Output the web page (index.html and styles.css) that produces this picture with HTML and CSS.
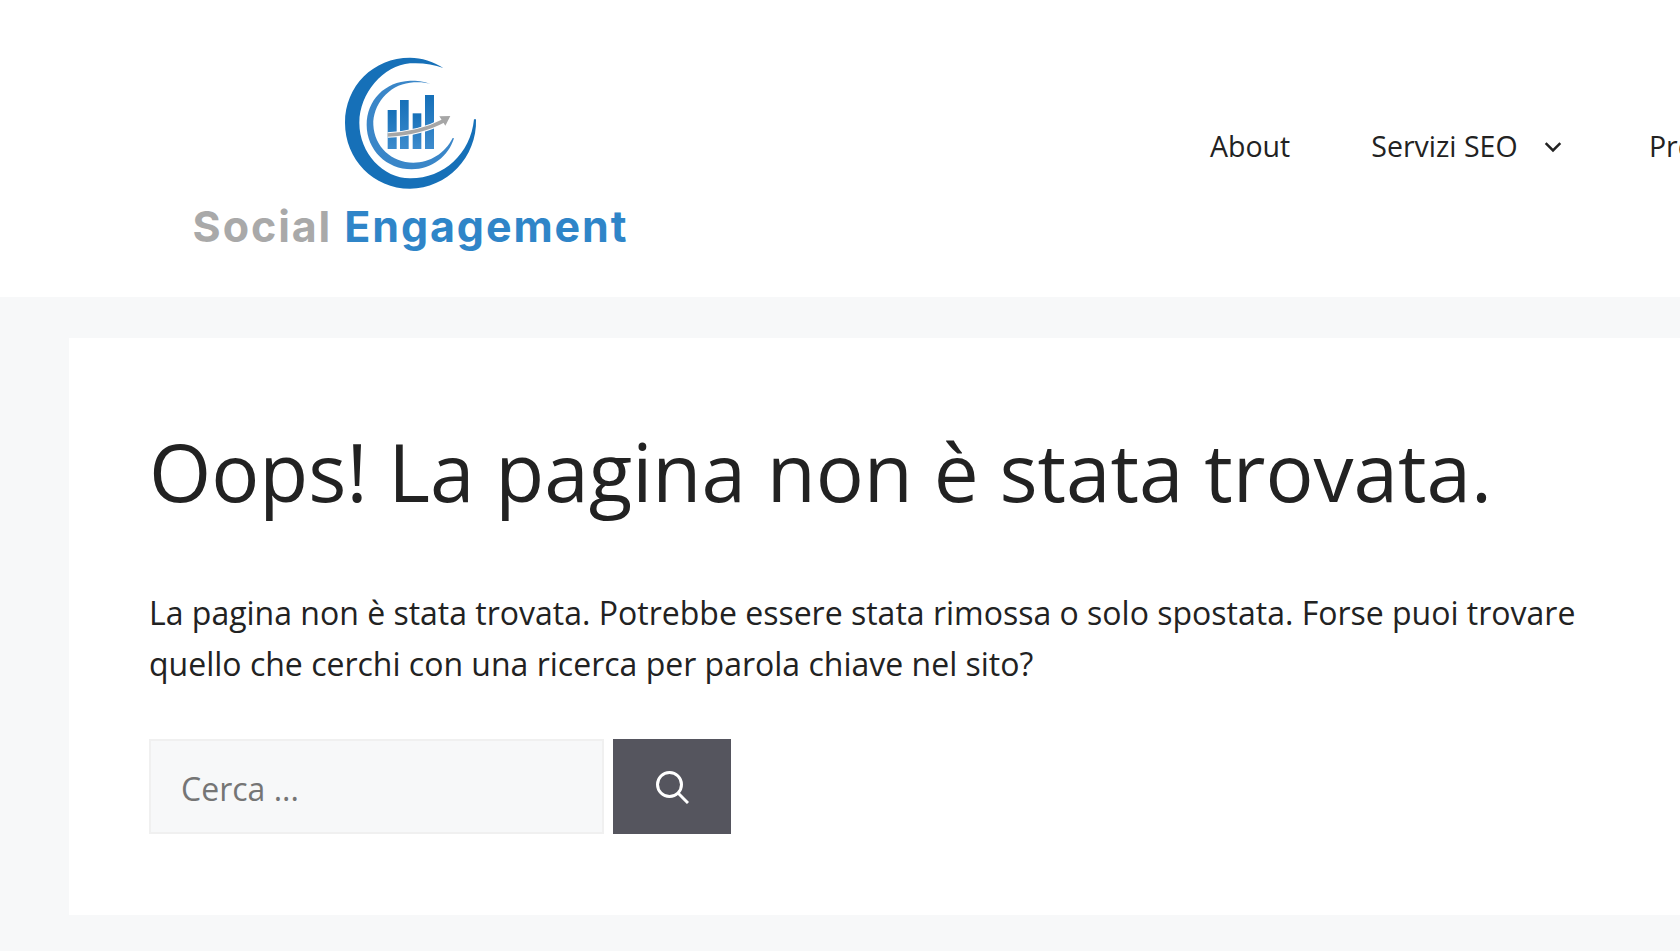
FILE: index.html
```html
<!DOCTYPE html>
<html lang="it">
<head>
<meta charset="UTF-8" />
<meta name="viewport" content="width=device-width, initial-scale=1" />
<title>Pagina non trovata - Social Engagement</title>
<link rel="stylesheet" href="styles.css">
</head>
<body>

<header class="site-header">
  <a class="logo" href="#">
    <svg class="logo-mark" viewBox="0 0 510 450" aria-hidden="true">
      <defs>
        <linearGradient id="bar-fill" x1="0" y1="0" x2="0" y2="1">
          <stop offset="0" stop-color="#1670b8" />
          <stop offset="1" stop-color="#3c8bcd" />
        </linearGradient>
      </defs>
      <path class="ring-outer" d="M370 54C340 34 305 23 270 23C160 23 75 108 75 218C75 328 160 416 270 416C380 416 472 322 468 208L462 208C452 312 370 386 270 385C190 384 118 310 118 218C118 130 190 46 270 40C305 38 340 42 370 54Z" />
      <path class="ring-inner" d="M332 102C310 93 290 92 270 92C195 95 140 150 140 225C140 300 200 358 275 358C335 358 385 320 402 265L398 264C375 310 330 338 280 338C215 338 163 290 160 225C158 165 205 105 270 98C295 95 315 97 332 102Z" />
      <rect class="bar" x="203" y="180" width="27" height="117" />
      <rect class="bar" x="240" y="150" width="26" height="147" />
      <rect class="bar" x="278" y="190" width="26" height="107" />
      <rect class="bar" x="315" y="135" width="27" height="162" />
      <path class="arrow-gap" d="M203 255C260 252 320 240 372 212" />
      <path class="arrow-line" d="M203 255C260 252 320 240 372 212" />
      <path class="arrow-head" d="M358 199L391 198L376 227Z" />
    </svg>
    <span class="logo-text"><span class="logo-grey">Social</span> <span class="logo-blue">Engagement</span></span>
  </a>
  <nav class="main-nav">
    <a href="#">About</a>
    <a href="#">Servizi SEO
      <svg class="chevron" viewBox="0 0 16 10" aria-hidden="true"><path d="M1.5 1.5L8 8L14.500 1.500" /></svg>
    </a>
    <a href="#">Prezzi</a>
  </nav>
</header>

<main class="content">
  <h1>Oops! La pagina non è stata trovata.</h1>
  <p>La pagina non è stata trovata. Potrebbe essere stata rimossa o solo spostata. Forse puoi trovare quello che cerchi con una ricerca per parola chiave nel sito?</p>
  <form class="search-form">
    <input type="search" placeholder="Cerca ..." aria-label="Cerca">
    <button type="submit" aria-label="Cerca">
      <svg viewBox="0 0 34 34" aria-hidden="true"><circle cx="14.500" cy="14.500" r="12" /><path d="M23 23L33 33" /></svg>
    </button>
  </form>
</main>

</body>
</html>
```

FILE: styles.css
```css
html, body {
  margin: 0;
  padding: 0;
  height: 951px;
  overflow: hidden;
}
body {
  font-family: "Open Sans", "Noto Sans", sans-serif;
  background: #f7f8f9;
  color: #222;
  width: 1900px;
}
a {
  color: inherit;
  text-decoration: none;
}

/* Header */
.site-header {
  background: #fff;
  height: 297px;
  display: flex;
  align-items: flex-start;
}
.logo {
  margin-left: 193px;
  width: 435px;
  display: flex;
  flex-direction: column;
  align-items: center;
  padding-top: 50px;
}
.logo-mark {
  width: 170px;
  height: 150px;
  margin-right: 11px;
}
.ring-outer { fill: #1670b8; }
.ring-inner { fill: #3a86c8; }
.bar { fill: url(#bar-fill); }
.arrow-gap {
  fill: none;
  stroke: #fff;
  stroke-width: 17;
}
.arrow-line {
  fill: none;
  stroke: #a6a6a6;
  stroke-width: 11;
}
.arrow-head { fill: #a6a6a6; }
.logo-text {
  font-family: Inter, "Liberation Sans", sans-serif;
  font-weight: 700;
  font-size: 43px;
  line-height: 50px;
  letter-spacing: 1.9px;
  white-space: nowrap;
  margin-top: 1px;
}
.logo-grey { color: #a9a9a9; }
.logo-blue { color: #2f85c8; }

.main-nav {
  display: flex;
  gap: 81px;
  margin-left: 582px;
  padding-top: 126px;
  font-size: 28.5px;
  line-height: 40px;
}
.main-nav a {
  white-space: nowrap;
}
.chevron {
  width: 18px;
  height: 12px;
  margin-left: 19px;
  margin-right: 6px;
  vertical-align: 4px;
}
.chevron path {
  fill: none;
  stroke: #222;
  stroke-width: 2.2;
}

/* Content */
.content {
  background: #fff;
  margin: 41px 0 0 69px;
  height: 577px;
  padding: 80px 80px 0;
  box-sizing: border-box;
}
.content h1 {
  margin: 0;
  font-weight: 400;
  font-size: 80px;
  line-height: 106px;
  color: #222;
  white-space: nowrap;
}
.content p {
  margin: 63px 0 0;
  font-size: 32px;
  line-height: 51px;
  width: 1450px;
  color: #222;
}
.search-form {
  display: flex;
  gap: 9px;
  margin-top: 50px;
}
.search-form input {
  width: 455px;
  height: 95px;
  box-sizing: border-box;
  background: #f7f8f9;
  border: 2px solid #f0f0f0;
  padding: 3px 30px 0;
  font: inherit;
  font-size: 32px;
  color: #666;
  outline: none;
  -webkit-appearance: none;
  appearance: none;
  border-radius: 0;
}
.search-form input::placeholder {
  color: #757575;
  opacity: 1;
}
.search-form button {
  width: 118px;
  height: 95px;
  background: #55555e;
  border: none;
  padding: 0;
  display: flex;
  align-items: center;
  justify-content: center;
  cursor: pointer;
}
.search-form button svg {
  width: 34px;
  height: 34px;
  fill: none;
  stroke: #fff;
  stroke-width: 3;
}
```
